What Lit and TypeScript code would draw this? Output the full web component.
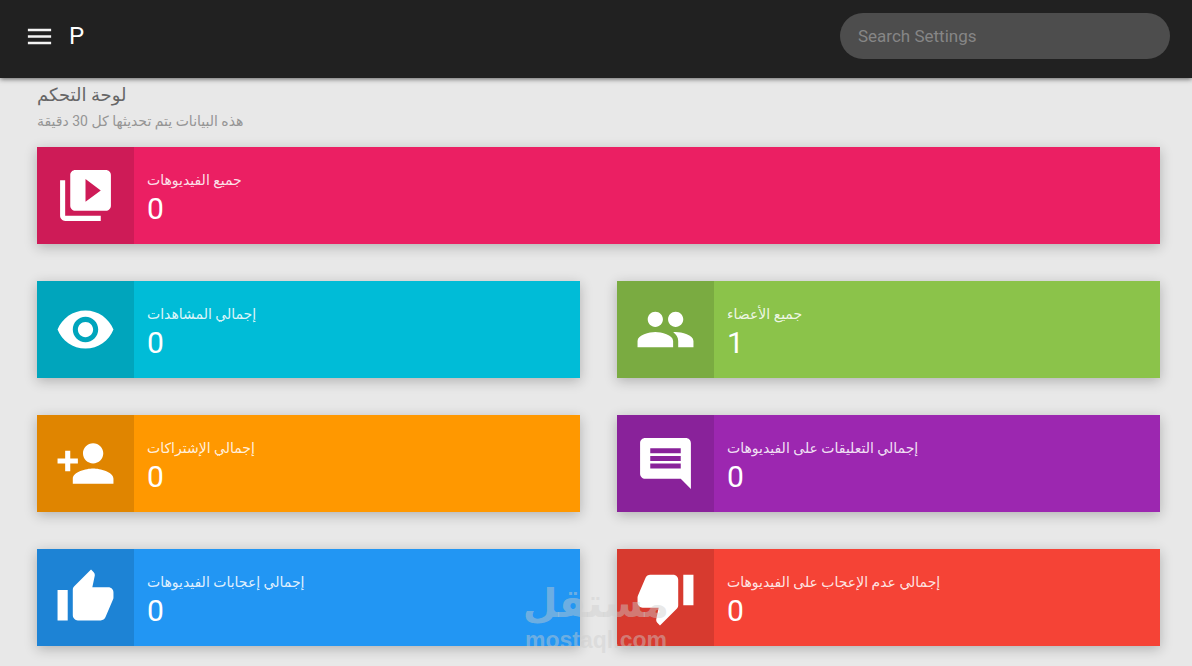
import { LitElement, html, css, svg } from "lit";
import { customElement, property } from "lit/decorators.js";
import { classMap } from "lit/directives/class-map.js";

const icons: Record<string, string> = {
  library:
    "M4 6H2v14c0 1.100.9 2 2 2h14v-2H4V6zm16-4H8c-1.100 0-2 .9-2 2v12c0 1.100.9 2 2 2h12c1.100 0 2-.9 2-2V4c0-1.100-.9-2-2-2zm-8 12.500v-9l6 4.500-6 4.500z",
  eye: "M12 4.500C7 4.500 2.730 7.610 1 12c1.730 4.390 6 7.500 11 7.500s9.270-3.110 11-7.500c-1.730-4.390-6-7.500-11-7.500zM12 17c-2.760 0-5-2.240-5-5s2.240-5 5-5 5 2.240 5 5-2.240 5-5 5zm0-8c-1.660 0-3 1.340-3 3s1.340 3 3 3 3-1.340 3-3-1.340-3-3-3z",
  people:
    "M16 11c1.660 0 2.990-1.340 2.990-3S17.660 5 16 5c-1.660 0-3 1.340-3 3s1.340 3 3 3zm-8 0c1.660 0 2.990-1.340 2.990-3S9.660 5 8 5C6.340 5 5 6.340 5 8s1.340 3 3 3zm0 2c-2.330 0-7 1.170-7 3.500V19h14v-2.500c0-2.330-4.670-3.500-7-3.500zm8 0c-.29 0-.62.020-.97.050 1.160.840 1.970 1.970 1.970 3.450V19h6v-2.500c0-2.330-4.670-3.500-7-3.500z",
  personAdd:
    "M15 12c2.210 0 4-1.790 4-4s-1.790-4-4-4-4 1.790-4 4 1.790 4 4 4zm-9-2V7H4v3H1v2h3v3h2v-3h3v-2H6zm9 4c-2.670 0-8 1.340-8 4v2h16v-2c0-2.660-5.330-4-8-4z",
  comment:
    "M21.990 4c0-1.100-.89-2-1.990-2H4c-1.100 0-2 .9-2 2v12c0 1.100.9 2 2 2h14l4 4-.010-18zM18 14H6v-2h12v2zm0-3H6V9h12v2zm0-3H6V6h12v2z",
  thumbUp:
    "M1 21h4V9H1v12zm22-11c0-1.100-.9-2-2-2h-6.310l.95-4.570.030-.32c0-.41-.17-.79-.44-1.060L14.170 1 7.590 7.590C7.220 7.950 7 8.450 7 9v10c0 1.100.9 2 2 2h9c.83 0 1.540-.5 1.840-1.220l3.020-7.050c.09-.23.14-.47.14-.73v-2z",
  thumbDown:
    "M15 3H6c-.83 0-1.540.5-1.840 1.220l-3.020 7.050c-.09.23-.14.47-.14.73v2c0 1.100.9 2 2 2h6.310l-.95 4.570-.030.32c0 .41.17.79.44 1.060L9.830 23l6.590-6.590c.36-.36.58-.86.58-1.410V5c0-1.100-.9-2-2-2zm4 0v12h4V3h-4z",
  menu: "M3 18h18v-2H3v2zm0-5h18v-2H3v2zm0-7v2h18V6H3z",
};

const glyph = (name: string) => html`
  <svg viewBox="0 0 24 24" aria-hidden="true">${svg`<path d=${icons[name]}></path>`}</svg>
`;

@customElement("stat-card")
export class StatCard extends LitElement {
  @property() icon = "";
  @property() label = "";
  @property() tone = "";
  @property({ type: Number }) value = 0;

  static styles = css`
    :host {
      display: block;
    }
    .card {
      display: flex;
      min-height: 97px;
      color: #fff;
      box-shadow: 0 3px 12px rgba(0, 0, 0, 0.24);
    }
    .pink { background: #eb1f63; }
    .cyan { background: #00bcd7; }
    .green { background: #8bc34a; }
    .orange { background: #ff9800; }
    .purple { background: #9c27b0; }
    .blue { background: #2296f3; }
    .red { background: #f54336; }
    .icon {
      display: flex;
      align-items: center;
      justify-content: center;
      flex: 0 0 97px;
      background: rgba(0, 0, 0, 0.12);
    }
    .icon svg {
      width: 61px;
      height: 61px;
      fill: #fff;
    }
    .body {
      display: flex;
      flex-direction: column;
      justify-content: center;
      align-items: flex-start;
      padding: 0 13px;
    }
    .label {
      font-size: 14px;
      line-height: 26px;
      color: rgba(255, 255, 255, 0.87);
    }
    .value {
      font-size: 30px;
      line-height: 32px;
    }
  `;

  render() {
    return html`
      <section class=${classMap({ card: true, [this.tone]: true })}>
        <div class="icon">${glyph(this.icon)}</div>
        <div class="body">
          <div class="label" dir="rtl">${this.label}</div>
          <div class="value">${this.value}</div>
        </div>
      </section>
    `;
  }
}

const stats = [
  { icon: "library", tone: "pink", label: "جميع الفيديوهات", value: 0 },
  { icon: "eye", tone: "cyan", label: "إجمالي المشاهدات", value: 0 },
  { icon: "people", tone: "green", label: "جميع الأعضاء", value: 1 },
  { icon: "personAdd", tone: "orange", label: "إجمالي الإشتراكات", value: 0 },
  { icon: "comment", tone: "purple", label: "إجمالي التعليقات على الفيديوهات", value: 0 },
  { icon: "thumbUp", tone: "blue", label: "إجمالي إعجابات الفيديوهات", value: 0 },
  { icon: "thumbDown", tone: "red", label: "إجمالي عدم الإعجاب على الفيديوهات", value: 0 },
];

@customElement("app-root")
export class AppRoot extends LitElement {
  static styles = css`
    :host {
      display: block;
      position: relative;
      min-height: 100vh;
      background: #e8e8e8;
      font-family: Roboto, "DejaVu Sans", sans-serif;
      overflow: hidden;
    }
    .bar {
      display: flex;
      align-items: center;
      justify-content: space-between;
      box-sizing: border-box;
      height: 78px;
      padding: 0 22px 6px 24px;
      background: #212121;
      box-shadow: 0 1px 5px rgba(0, 0, 0, 0.6);
    }
    .brand {
      display: flex;
      align-items: center;
      gap: 14px;
      color: #fff;
      font-size: 24px;
      line-height: 30px;
    }
    .menu {
      display: flex;
      padding: 0;
      border: 0;
      background: none;
    }
    .menu svg {
      width: 31px;
      height: 31px;
      fill: #f4f4f4;
    }
    .search {
      box-sizing: border-box;
      width: 330px;
      height: 46px;
      padding: 0 18px;
      border: 0;
      border-radius: 23px;
      background: #4d4d4d;
      color: #fff;
      font: 17px/24px Roboto, sans-serif;
    }
    .search::placeholder {
      color: #868686;
      opacity: 1;
    }
    .content {
      padding: 3px 32px 19px 37px;
    }
    .heading {
      display: flex;
      flex-direction: column;
      align-items: flex-start;
      margin-bottom: 12px;
    }
    .title {
      margin: 0;
      font-size: 18px;
      font-weight: 400;
      line-height: 27px;
      color: #666;
    }
    .note {
      margin: 0;
      font-size: 14px;
      line-height: 27px;
      color: #959595;
    }
    .grid {
      display: grid;
      grid-template-columns: 1fr 1fr;
      gap: 37px;
    }
    .wide {
      grid-column: 1 / -1;
    }
    .mark {
      position: absolute;
      left: 0;
      right: 0;
      bottom: 12px;
      display: flex;
      flex-direction: column;
      align-items: center;
      color: rgba(205, 205, 205, 0.45);
      font-weight: 700;
      pointer-events: none;
    }
    .mark-name {
      font-family: "DejaVu Sans", sans-serif;
      font-size: 40px;
      line-height: 48px;
    }
    .mark-site {
      font-family: "Liberation Sans", sans-serif;
      font-size: 23px;
      line-height: 27px;
    }
  `;

  render() {
    return html`
      <header class="bar">
        <div class="brand">
          <button class="menu" aria-label="Menu">${glyph("menu")}</button>
          <span>P</span>
        </div>
        <input class="search" type="text" placeholder="Search Settings" aria-label="Search Settings" />
      </header>
      <main class="content">
        <div class="heading">
          <h1 class="title" dir="rtl">لوحة التحكم</h1>
          <p class="note" dir="rtl">هذه البيانات يتم تحديثها كل 30 دقيقة</p>
        </div>
        <div class="grid">
          ${stats.map(
            (s, i) => html`<stat-card
              class=${classMap({ wide: i === 0 })}
              icon=${s.icon}
              tone=${s.tone}
              label=${s.label}
              .value=${s.value}
            ></stat-card>`
          )}
        </div>
      </main>
      <div class="mark">
        <span class="mark-name" dir="rtl">مستقل</span>
        <span class="mark-site">mostaql.com</span>
      </div>
    `;
  }
}
